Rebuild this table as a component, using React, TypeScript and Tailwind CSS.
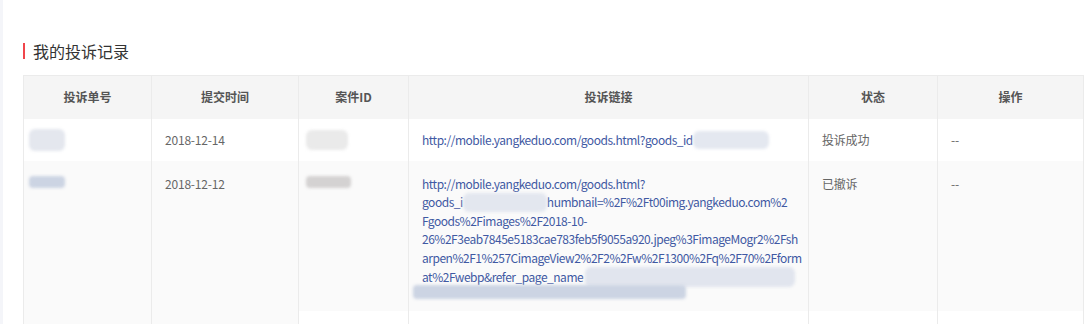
import React from "react";

const Blur = ({ className }: { className: string }) => (
  <span className={"rounded-md blur-[1.5px] " + className} />
);

export default function App() {
  const th = "h-[43px] bg-[#f5f5f5] text-[12px] font-bold text-[#555] text-center border-l border-[#ebebeb] align-middle";
  const cell = "px-[13px] text-[12px] text-[#666] border-l border-[#ebebeb] leading-[18px] tracking-[-0.2px]";
  const top = cell + " align-top pt-[14px]";
  const mid = cell + " align-middle";
  const link = "text-[#3f59a3] whitespace-nowrap tracking-[-0.48px]";
  return (
    <div className="w-[1091px] h-[324px] overflow-hidden bg-[#f4f5f9] pl-[3px] font-['Microsoft_YaHei','Noto_Sans_CJK_SC',sans-serif]">
      <div className="h-full bg-white pl-[20px] pt-[42px]">
        <div className="flex items-center h-[18px]">
          <div className="w-[2px] h-[16px] bg-[#f0454b]" />
          <div className="ml-[8px] text-[16px] text-[#333] leading-[18px]">我的投诉记录</div>
        </div>
        <table className="mt-[15px] border-collapse table-fixed w-[1060px] border-t border-r border-[#ebebeb]">
          <colgroup>
            <col className="w-[128px]" />
            <col className="w-[147px]" />
            <col className="w-[110px]" />
            <col className="w-[400px]" />
            <col className="w-[129px]" />
            <col className="w-[146px]" />
          </colgroup>
          <thead>
            <tr>
              <th className={th}>投诉单号</th>
              <th className={th}>提交时间</th>
              <th className={th}>案件ID</th>
              <th className={th}>投诉链接</th>
              <th className={th}>状态</th>
              <th className={th}>操作</th>
            </tr>
          </thead>
          <tbody>
            <tr className="h-[42px] bg-white">
              <td className="border-l border-[#ebebeb] align-middle pl-[5px]">
                <Blur className="block w-[36px] h-[22px] bg-[#e4e7ee]" />
              </td>
              <td className={mid}>2018-12-14</td>
              <td className="border-l border-[#ebebeb] align-middle pl-[7px]">
                <Blur className="block w-[42px] h-[20px] bg-[#eaeaea]" />
              </td>
              <td className={mid}>
                <div className={link + " flex items-center"}>
                  <span>http://mobile.yangkeduo.com/goods.html?goods_id</span>
                  <Blur className="block w-[76px] h-[18px] bg-[#e4e8f0]" />
                </div>
              </td>
              <td className={mid}>投诉成功</td>
              <td className={mid}>--</td>
            </tr>
            <tr className="h-[150px] bg-[#fafafa]">
              <td className="border-l border-[#ebebeb] align-top pl-[5px] pt-[15px]">
                <Blur className="block w-[36px] h-[12px] bg-[#ccd4e3] rounded-sm" />
              </td>
              <td className={top}>2018-12-12</td>
              <td className="border-l border-[#ebebeb] align-top pl-[7px] pt-[15px]">
                <Blur className="block w-[45px] h-[12px] bg-[#d4d2d2] rounded-sm" />
              </td>
              <td className={top}>
                <div className={link + " leading-[18.4px]"}>
                  <div>http://mobile.yangkeduo.com/goods.html?</div>
                  <div className="flex items-center">
                    <span>goods_i</span>
                    <Blur className="block w-[84px] h-[19px] bg-[#e3e7ef]" />
                    <span>humbnail=%2F%2Ft00img.yangkeduo.com%2</span>
                  </div>
                  <div>Fgoods%2Fimages%2F2018-10-</div>
                  <div>26%2F3eab7845e5183cae783feb5f9055a920.jpeg%3FimageMogr2%2Fsh</div>
                  <div>arpen%2F1%257CimageView2%2F2%2Fw%2F1300%2Fq%2F70%2Fform</div>
                  <div className="flex items-center">
                    <span>at%2Fwebp&amp;refer_page_name</span>
                    <Blur className="block ml-[2px] w-[262px] h-[20px] bg-[#e1e5ee]" />
                  </div>
                  <div className="-ml-[9px] mt-[-2px]">
                    <Blur className="block w-[273px] h-[14px] bg-[#ccd4e3] rounded-sm" />
                  </div>
                </div>
              </td>
              <td className={top}>已撤诉</td>
              <td className={top}>--</td>
            </tr>
            <tr className="h-[40px]">
              <td className="border-l border-[#ebebeb] bg-[#fafafa]" />
              <td className="border-l border-[#ebebeb] bg-[#fafafa]" />
              <td className="border-l border-[#ebebeb] bg-white" />
              <td className="border-l border-[#ebebeb] bg-white" />
              <td className="border-l border-[#ebebeb] bg-white" />
              <td className="border-l border-[#ebebeb] bg-white" />
            </tr>
          </tbody>
        </table>
      </div>
    </div>
  );
}
